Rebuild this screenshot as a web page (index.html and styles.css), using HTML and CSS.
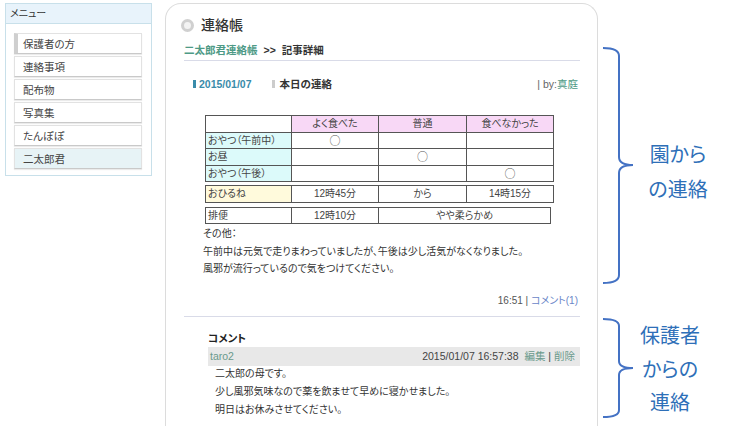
FILE: index.html
```html
<!DOCTYPE html>
<html lang="ja">
<head>
  <meta charset="UTF-8">
  <meta name="viewport" content="width=device-width, initial-scale=1.0">
  <title>連絡帳</title>
  <link rel="stylesheet" href="styles.css">
</head>
<body>
  <div class="page">
    <!-- Side menu -->
    <nav class="menu">
      <div class="menu-head">メニュー</div>
      <ul class="menu-list">
        <li class="first">保護者の方</li>
        <li>連絡事項</li>
        <li>配布物</li>
        <li>写真集</li>
        <li>たんぽぽ</li>
        <li class="current">二太郎君</li>
      </ul>
    </nav>

    <!-- Notebook entry -->
    <main class="panel">
      <h1 class="panel-title"><span class="title-icon"></span>連絡帳</h1>
      <div class="crumbs"><a href="#">二太郎君連絡帳</a><span class="sep">&gt;&gt;</span>記事詳細</div>

      <div class="entry-head">
        <span class="date">2015/01/07</span>
        <span class="entry-title">本日の連絡</span>
        <span class="by">| by:<a href="#">真庭</a></span>
      </div>

      <div class="report">
        <table class="grid meals">
          <colgroup><col class="c1"><col class="c2"><col class="c3"><col class="c4"></colgroup>
          <tr class="head"><td class="blank"></td><td>よく食べた</td><td>普通</td><td>食べなかった</td></tr>
          <tr><td class="label">おやつ（午前中）</td><td class="mark">○</td><td></td><td></td></tr>
          <tr><td class="label">お昼</td><td></td><td class="mark">○</td><td></td></tr>
          <tr><td class="label">おやつ（午後）</td><td></td><td></td><td class="mark">○</td></tr>
        </table>
        <table class="grid nap">
          <colgroup><col class="c1"><col class="c2"><col class="c3"><col class="c4"></colgroup>
          <tr><td class="label">おひるね</td><td>12時45分</td><td>から</td><td>14時15分</td></tr>
        </table>
        <table class="grid stool">
          <colgroup><col class="c1"><col class="c2"><col class="c5"></colgroup>
          <tr><td class="label">排便</td><td>12時10分</td><td>やや柔らかめ</td></tr>
        </table>
        <p class="other">その他：<br>午前中は元気で走りまわっていましたが、午後は少し活気がなくなりました。<br>風邪が流行っているので気をつけてください。</p>
      </div>

      <div class="entry-foot">16:51 | <a href="#">コメント(1)</a></div>

      <section class="comments">
        <h2>コメント</h2>
        <div class="comment-bar">
          <a href="#">taro2</a>
          <span class="stamp">2015/01/07 16:57:38 <a href="#">編集</a> | <a href="#">削除</a></span>
        </div>
        <p class="comment-body">二太郎の母です。<br>少し風邪気味なので薬を飲ませて早めに寝かせました。<br>明日はお休みさせてください。</p>
      </section>
    </main>

    <!-- Annotations -->
    <aside class="notes">
      <div class="note note-school">
        <svg class="brace" width="32" height="237" viewBox="0 0 32 237">
          <path d="M1,1 Q17,1 17,9 V110 Q17,118 31,118 Q17,118 17,126 V228 Q17,236 1,236" />
        </svg>
        <div class="note-text">園から<br>の連絡</div>
      </div>
      <div class="note note-parent">
        <svg class="brace" width="32" height="100" viewBox="0 0 32 100">
          <path d="M1,1 Q17,1 17,8 V43 Q17,50 31,50 Q17,50 17,57 V92 Q17,99 1,99" />
        </svg>
        <div class="note-text">保護者<br>からの<br>連絡</div>
      </div>
    </aside>
  </div>
</body>
</html>
```

FILE: styles.css
```css
body {
  margin: 0;
  padding: 0;
  background-color: #fff;
  color: #333;
  font-family: "Liberation Sans", "Noto Sans CJK JP", sans-serif;
  font-feature-settings: "palt";
  font-size: 10.5px;
  overflow: hidden;
}
a {
  color: #4e9a86;
  text-decoration: none;
}
.page {
  display: flex;
  align-items: flex-start;
  padding: 3px 0 0 5px;
}

/* Side menu */
.menu {
  width: 147px;
  box-sizing: border-box;
  border: 1px solid #c8e0ea;
}
.menu-head {
  height: 19px;
  line-height: 19px;
  padding-left: 4px;
  background-color: #e8f3fb;
  border-bottom: 1px solid #c8e0ea;
  font-size: 10px;
  color: #333;
}
.menu-list {
  list-style: none;
  margin: 0;
  padding: 9px 9px 4px 8px;
}
.menu-list li {
  height: 21px;
  line-height: 21px;
  box-sizing: border-box;
  margin-bottom: 2px;
  padding-left: 8px;
  border: 1px solid #e2e2e2;
  border-bottom-color: #c9c9c9;
  box-shadow: 0 1px 1px rgba(0, 0, 0, 0.08);
  font-size: 10.5px;
  color: #444;
}
.menu-list li.first {
  border-left: 4px solid #cfcfcf;
  padding-left: 5px;
}
.menu-list li.current {
  background-color: #e7f3f6;
}

/* Main panel */
.panel {
  width: 433px;
  min-height: 440px;
  box-sizing: border-box;
  margin-left: 13px;
  padding: 0 17px 0 18px;
  border: 1px solid #dcdcdc;
  border-bottom: none;
  border-radius: 16px 16px 0 0;
}
.panel-title {
  display: flex;
  align-items: center;
  gap: 7px;
  margin: 0 0 0 -3px;
  padding-top: 10px;
  line-height: 22px;
  font-size: 14px;
  font-weight: 500;
  color: #333;
}
.title-icon {
  width: 13px;
  height: 13px;
  box-sizing: border-box;
  border-radius: 50%;
  border: 3px solid #d0d0d0;
  background-color: #f3f3f3;
}
.crumbs {
  margin-top: 6px;
  padding-bottom: 2px;
  line-height: 16px;
  border-bottom: 1px solid #d9dbe8;
  font-weight: bold;
  color: #333;
}
.crumbs .sep {
  margin: 0 6px;
}
.entry-head {
  display: flex;
  align-items: center;
  margin-top: 15px;
  padding-left: 9px;
  line-height: 16px;
  font-weight: bold;
}
.date {
  color: #3a8caa;
}
.date::before,
.entry-title::before {
  content: "";
  display: inline-block;
  width: 3px;
  height: 8px;
  margin-right: 3px;
  background-color: #3a8caa;
}
.entry-title {
  margin-left: 20px;
}
.entry-title::before {
  background-color: #cccccc;
  margin-right: 5px;
}
.by {
  margin-left: auto;
  padding-right: 2px;
  font-weight: normal;
  color: #666;
}

/* Daily report tables */
.report {
  margin-top: 23px;
  padding-left: 21px;
}
.grid {
  border-collapse: collapse;
  table-layout: fixed;
  font-size: 10px;
  color: #444;
}
.grid td {
  height: 15.5px;
  padding: 0 2px;
  line-height: 15px;
  border: 1px solid #555;
  text-align: center;
  white-space: nowrap;
}
.grid td.label {
  text-align: left;
  background-color: #dcfafa;
}
.grid td.mark {
  font-family: "Noto Sans CJK JP", sans-serif;
  font-feature-settings: normal;
  font-size: 11px;
  color: #555;
}
.grid .head td {
  background-color: #f8d8f6;
}
.grid .head td.blank {
  background-color: #fff;
}
.c1 { width: 86px; }
.c2 { width: 87px; }
.c3 { width: 88px; }
.c4 { width: 87px; }
.c5 { width: 172px; }
.meals { width: 348px; }
.nap {
  width: 348px;
  margin-top: 3px;
}
.nap td.label {
  background-color: #fffadc;
}
.stool {
  width: 345px;
  margin-top: 4px;
}
.stool td.label {
  background-color: #fff;
}
.other {
  margin: 1px 0 0 -2px;
  line-height: 17.5px;
  font-size: 10px;
  color: #333;
}
.entry-foot {
  margin-top: 15px;
  padding-right: 2px;
  line-height: 16px;
  text-align: right;
  font-size: 10px;
  color: #555;
}
.entry-foot a {
  color: #6a86c8;
}

/* Comments */
.comments {
  margin-top: 7px;
  padding-left: 24px;
  border-top: 1px solid #d9dbe8;
}
.comments h2 {
  margin: 13px 0 1px;
  line-height: 16px;
  font-size: 10.5px;
  font-weight: bold;
  color: #222;
}
.comment-bar {
  display: flex;
  justify-content: space-between;
  height: 19px;
  line-height: 19px;
  padding: 0 5px 0 2px;
  background-color: #e8e8e8;
  color: #444;
}
.comment-bar a {
  color: #6a9a8c;
}
.stamp a {
  margin-left: 3px;
}
.stamp a + a {
  margin-left: 0;
}
.comment-body {
  margin: -1px 0 0;
  padding-left: 7px;
  line-height: 18px;
  font-size: 10px;
  color: #333;
}

/* Annotations */
.notes {
  display: flex;
  flex-direction: column;
  margin-left: 4px;
}
.note {
  display: flex;
  align-items: center;
}
.brace path {
  fill: none;
  stroke: #4472c4;
  stroke-width: 2;
}
.note-text {
  font-family: "Noto Sans CJK JP", sans-serif;
  font-size: 20px;
  color: #2e6fb8;
  text-align: center;
}
.note-school {
  margin-top: 44px;
}
.note-school .note-text {
  width: 72px;
  margin-left: 8px;
  padding-top: 11px;
  line-height: 35px;
}
.note-parent {
  margin-top: 34px;
}
.note-parent .note-text {
  width: 66px;
  margin-left: 3px;
  line-height: 33.5px;
}
```
